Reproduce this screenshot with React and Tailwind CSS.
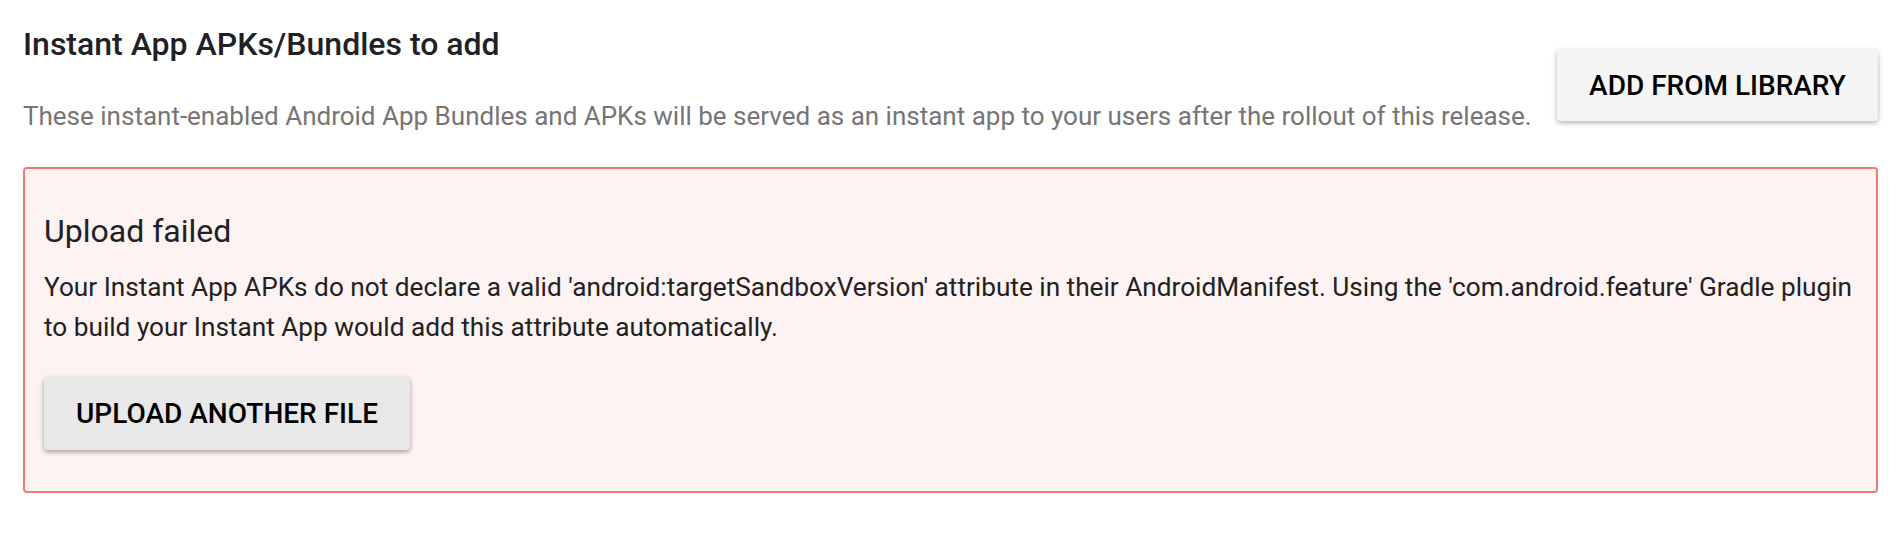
import React from 'react';

const InstantAppUpload = () => {
  return (
    <div className="min-h-screen bg-white font-['Roboto',sans-serif] pl-[23px] pr-[24px] pt-[26px]">
      <div className="flex items-start justify-between">
        <div>
          <h2 className="text-[32px] leading-[36px] font-medium text-[#202124]">
            Instant App APKs/Bundles to add
          </h2>
          <p className="mt-[38px] text-[26px] leading-[32px] text-[#757575]">
            These instant-enabled Android App Bundles and APKs will be served as an instant app to your users after the rollout of this release.
          </p>
        </div>
        <button
          type="button"
          className="mt-[24px] flex h-[71px] w-[321px] shrink-0 items-center justify-center rounded-[4px] bg-[#f5f5f5] text-[28px] font-medium text-black shadow-[0_2px_4px_rgba(0,0,0,0.25),0_1px_8px_rgba(0,0,0,0.08)]"
        >
          ADD FROM LIBRARY
        </button>
      </div>

      {/* error card */}
      <div className="mt-[35px] rounded-[4px] border-2 border-[#f07b73] bg-[#fcf3f2] pl-[19px] pr-[12px] pt-[44px] pb-[41px]">
        <h3 className="text-[32px] leading-[36px] text-[#202124]">Upload failed</h3>
        <p className="mt-[18px] text-[26.2px] leading-[40px] text-[#212121]">
          Your Instant App APKs do not declare a valid 'android:targetSandboxVersion' attribute in their AndroidManifest. Using the 'com.android.feature' Gradle plugin to build your Instant App would add this attribute automatically.
        </p>
        <button
          type="button"
          className="mt-[30px] flex h-[73px] w-[366px] items-center justify-center rounded-[4px] bg-[#e8e8e8] text-[28px] font-medium text-black shadow-[0_2px_4px_rgba(0,0,0,0.3),0_1px_8px_rgba(0,0,0,0.08)]"
        >
          UPLOAD ANOTHER FILE
        </button>
      </div>
    </div>
  );
};

export default function App() {
  return <InstantAppUpload />;
}
